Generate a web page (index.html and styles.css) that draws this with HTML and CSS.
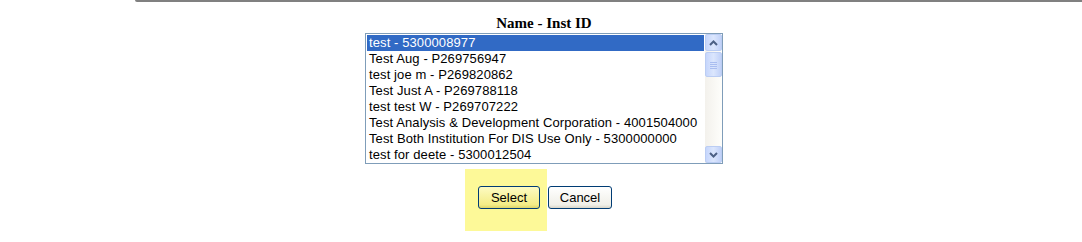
FILE: index.html
```html
<!DOCTYPE html>
<html lang="en">

<head>
    <meta charset="UTF-8">
    <title>Select Institution</title>
    <link rel="stylesheet" href="styles.css">
</head>

<body>
    <div class="top-rule"></div>
    <div class="picker">
        <h3 class="picker-title">Name - Inst ID</h3>
        <div class="listbox">
            <ul class="options">
                <li class="option selected">test - 5300008977</li>
                <li class="option">Test Aug - P269756947</li>
                <li class="option">test joe m - P269820862</li>
                <li class="option">Test Just A - P269788118</li>
                <li class="option">test test W - P269707222</li>
                <li class="option">Test Analysis &amp; Development Corporation - 4001504000</li>
                <li class="option">Test Both Institution For DIS Use Only - 5300000000</li>
                <li class="option">test for deete - 5300012504</li>
            </ul>
            <div class="scrollbar">
                <div class="sb-btn">
                    <svg width="9" height="6" viewBox="0 0 9 6"><path d="M1 5 L4.5 1.5 L8 5" fill="none" stroke="#4d6185" stroke-width="2"/></svg>
                </div>
                <div class="sb-thumb">
                    <svg width="7" height="8" viewBox="0 0 7 8">
                        <path d="M0 1.5h7M0 3.5h7M0 5.5h7M0 7.5h7" stroke="#a9bdf0" stroke-width="1"/>
                    </svg>
                </div>
                <div class="sb-track"></div>
                <div class="sb-btn">
                    <svg width="9" height="6" viewBox="0 0 9 6"><path d="M1 1 L4.5 4.5 L8 1" fill="none" stroke="#4d6185" stroke-width="2"/></svg>
                </div>
            </div>
        </div>
        <div class="actions">
            <div class="focus-cell">
                <button type="button" class="btn btn-select">Select</button>
            </div>
            <button type="button" class="btn btn-cancel">Cancel</button>
        </div>
    </div>
</body>

</html>
```

FILE: styles.css
```css
body {
    margin: 0;
    padding: 0;
    background-color: #fff;
    font-family: "Liberation Sans", Arial, sans-serif;
}

.top-rule {
    margin-left: 135px;
    height: 2px;
    background-color: #808080;
    border-bottom-left-radius: 3px;
}

.picker {
    margin-left: 365px;
    width: 358px;
}

.picker-title {
    margin: 12px 0 0;
    height: 19px;
    line-height: 19px;
    text-align: center;
    font-family: "Liberation Serif", "Times New Roman", serif;
    font-size: 15px;
    font-weight: bold;
    color: #000;
}

.listbox {
    display: flex;
    height: 129px;
    border: 1px solid #7f9db9;
    background: #fff;
}

.options {
    flex: 1;
    list-style: none;
    margin: 0;
    padding: 1px 1px 0;
}

.option {
    height: 16px;
    line-height: 16px;
    padding-left: 2px;
    font-size: 13px;
    letter-spacing: 0.1px;
    color: #000;
    white-space: nowrap;
}

.option.selected {
    background-color: #316ac5;
    color: #fff;
}

.scrollbar {
    width: 17px;
    display: flex;
    flex-direction: column;
    background: linear-gradient(to right, #f3f1ec, #fefefb);
}

.sb-btn,
.sb-thumb {
    height: 15px;
    border: 1px solid #bbcdf3;
    border-radius: 2px;
    background: linear-gradient(to right, #c6d6fc, #dbe6fd 50%, #c1d1f8);
    display: flex;
    align-items: center;
    justify-content: center;
}

.sb-thumb {
    height: 23px;
    margin-top: 1px;
}

.sb-track {
    flex: 1;
}

.actions {
    display: flex;
    align-items: flex-start;
    margin-left: 100px;
    margin-top: 5px;
}

.focus-cell {
    width: 82px;
    height: 62px;
    box-sizing: border-box;
    padding: 17px 0 0 13px;
    background-color: #fdf998;
}

.btn {
    height: 23px;
    margin: 0;
    padding: 0;
    font-family: "Liberation Sans", Arial, sans-serif;
    font-size: 13px;
    color: #000;
    border: 1px solid #003c74;
    border-radius: 3px;
    cursor: pointer;
}

.btn-select {
    width: 62px;
    background: linear-gradient(to bottom, #fdfbc2, #f3ec86 85%, #dcd46a);
}

.btn-cancel {
    width: 64px;
    margin-left: 1px;
    margin-top: 17px;
    background: linear-gradient(to bottom, #ffffff, #f0efe8 85%, #d8d5c8);
}
```
